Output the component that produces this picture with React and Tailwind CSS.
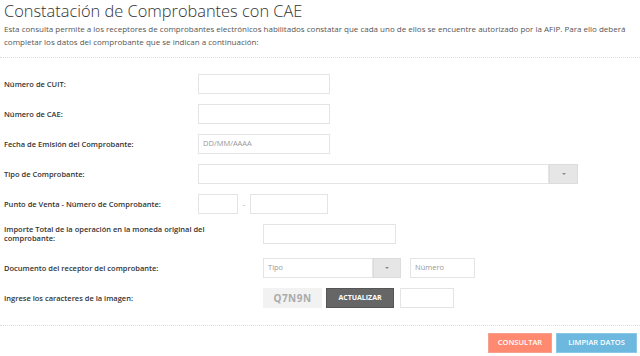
import React from 'react';

const Label = ({ children, className = '' }) => (
  <div className={`text-[7.5px] font-semibold text-[#333] leading-[9px] ${className}`}>{children}</div>
);

const Field = ({ className = '', placeholder = '' }) => (
  <div className={`h-[20px] border border-[#e4e4e4] bg-white flex items-center px-[4px] text-[7.5px] text-[#999] ${className}`}>
    {placeholder}
  </div>
);

const Caret = () => <span className="block w-0 h-0 border-l-[2px] border-r-[2px] border-t-[2px] border-l-transparent border-r-transparent border-t-[#888]" />;

export default function App() {
  return (
    <div className="w-[640px] h-[356px] bg-white overflow-hidden" style={{ fontFamily: '"Open Sans", sans-serif' }}>
      <div className="px-[4px]">
        <h1 className="text-[16.4px] font-light text-[#333] leading-[22px]">Constatación de Comprobantes con CAE</h1>
        <p className="text-[8px] text-[#555] leading-[13px]">
          Esta consulta permite a los receptores de comprobantes electrónicos habilitados constatar que cada uno de ellos se encuentre autorizado por la AFIP. Para ello deberá completar los datos del comprobante que se indican a continuación:
        </p>
      </div>
      <div className="mt-[9px] border-t border-dotted border-[#ddd]" />

      <div className="px-[4px] pt-[16px] flex flex-col gap-[10px]">
        <div className="flex items-center">
          <Label className="w-[194px]">Número de CUIT:</Label>
          <Field className="w-[132px]" />
        </div>
        <div className="flex items-center">
          <Label className="w-[194px]">Número de CAE:</Label>
          <Field className="w-[132px]" />
        </div>
        <div className="flex items-center">
          <Label className="w-[194px]">Fecha de Emisión del Comprobante:</Label>
          <Field className="w-[132px]" placeholder="DD/MM/AAAA" />
        </div>
        <div className="flex items-center">
          <Label className="w-[194px]">Tipo de Comprobante:</Label>
          <div className="flex">
            <Field className="w-[351px]" />
            <div className="w-[29px] h-[20px] bg-[#e6e6e6] border border-[#dcdcdc] flex items-center justify-center"><Caret /></div>
          </div>
        </div>
        <div className="flex items-center">
          <Label className="w-[194px]">Punto de Venta - Número de Comprobante:</Label>
          <Field className="w-[40px]" />
          <span className="w-[12px] text-center text-[8px] text-[#999]">-</span>
          <Field className="w-[78px]" />
        </div>
        <div className="flex items-center">
          <Label className="w-[210px] mr-[49px]">Importe Total de la operación en la moneda original del comprobante:</Label>
          <Field className="w-[133px]" />
        </div>
        <div className="flex items-center mt-[4px]">
          <Label className="w-[259px]">Documento del receptor del comprobante:</Label>
          <div className="flex">
            <Field className="w-[110px] text-[#888]" placeholder="Tipo" />
            <div className="w-[28px] h-[20px] bg-[#e6e6e6] border border-[#dcdcdc] flex items-center justify-center"><Caret /></div>
          </div>
          <Field className="w-[65px] ml-[9px] text-[#888]" placeholder="Número" />
        </div>
        <div className="flex items-center">
          <Label className="w-[259px]">Ingrese los caracteres de la imagen:</Label>
          <div className="w-[59px] h-[20px] bg-[#f2f2f2] flex items-center justify-center text-[10px] font-bold text-[#aaa] tracking-[0.5px]">Q7N9N</div>
          <div className="ml-[4px] w-[68px] h-[20px] bg-[#666] border border-[#555] flex items-center justify-center text-[7px] font-bold text-white">ACTUALIZAR</div>
          <Field className="w-[54px] ml-[6px]" />
        </div>
      </div>

      <div className="mt-[17px] border-t border-dotted border-[#ddd]" />
      <div className="flex justify-end gap-[4px] pr-[3px] pt-[7px]">
        <button className="w-[64px] h-[20px] bg-[#ff8a70] border border-[#f7a090] text-white text-[7.5px] font-semibold">CONSULTAR</button>
        <button className="w-[81px] h-[20px] bg-[#6cb8df] border border-[#8cc8e8] text-white text-[7.5px] font-semibold">LIMPIAR DATOS</button>
      </div>
    </div>
  );
}
